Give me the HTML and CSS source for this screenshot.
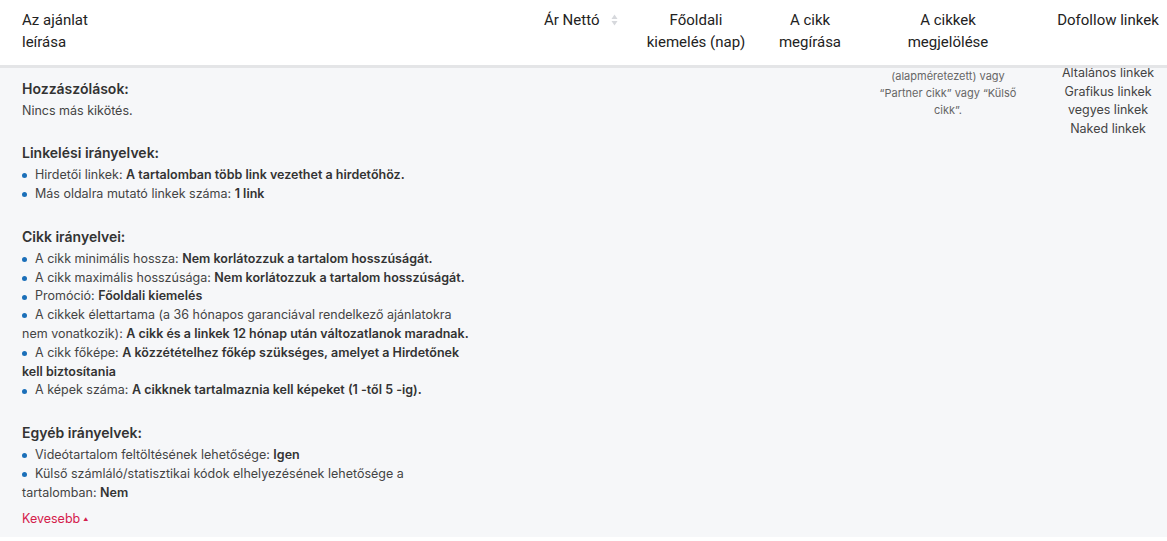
FILE: index.html
```html
<!DOCTYPE html>
<html lang="hu">

<head>
    <meta charset="UTF-8">
    <meta name="viewport" content="width=device-width, initial-scale=1.0">
    <title>Ajánlatok</title>
    <link rel="stylesheet" href="styles.css">
</head>

<body>
    <div class="offer-table">
        <div class="table-head">
            <div class="th th-desc">Az ajánlat<br>leírása</div>
            <div class="th th-price">Ár Nettó
                <span class="sort-icon">
                    <svg width="7" height="12" viewBox="0 0 7 12">
                        <path d="M3.5 0.5 L6.5 5 L0.5 5 Z" fill="#d6d8dc"/>
                        <path d="M3.5 11.5 L6.5 7 L0.5 7 Z" fill="#d6d8dc"/>
                    </svg>
                </span>
            </div>
            <div class="th th-center">Főoldali<br>kiemelés (nap)</div>
            <div class="th th-center">A cikk<br>megírása</div>
            <div class="th th-center">A cikkek<br>megjelölése</div>
            <div class="th th-center th-last">Dofollow linkek</div>
        </div>

        <div class="table-body">
            <div class="td td-desc">
                <div class="section">
                    <h3>Hozzászólások:</h3>
                    <p>Nincs más kikötés.</p>
                </div>

                <div class="section">
                    <h3>Linkelési irányelvek:</h3>
                    <ul>
                        <li>Hirdetői linkek: <b>A tartalomban több link vezethet a hirdetőhöz.</b></li>
                        <li>Más oldalra mutató linkek száma: <b>1 link</b></li>
                    </ul>
                </div>

                <div class="section">
                    <h3>Cikk irányelvei:</h3>
                    <ul>
                        <li>A cikk minimális hossza: <b>Nem korlátozzuk a tartalom hosszúságát.</b></li>
                        <li>A cikk maximális hosszúsága: <b>Nem korlátozzuk a tartalom hosszúságát.</b></li>
                        <li>Promóció: <b>Főoldali kiemelés</b></li>
                        <li>A cikkek élettartama (a 36 hónapos garanciával rendelkező ajánlatokra nem vonatkozik): <b>A cikk és a linkek 12 hónap után változatlanok maradnak.</b></li>
                        <li>A cikk főképe: <b>A közzétételhez főkép szükséges, amelyet a Hirdetőnek kell biztosítania</b></li>
                        <li>A képek száma: <b>A cikknek tartalmaznia kell képeket (1 -től 5 -ig).</b></li>
                    </ul>
                </div>

                <div class="section section-last">
                    <h3>Egyéb irányelvek:</h3>
                    <ul>
                        <li>Videótartalom feltöltésének lehetősége: <b>Igen</b></li>
                        <li>Külső számláló/statisztikai kódok elhelyezésének lehetősége a tartalomban: <b>Nem</b></li>
                    </ul>
                </div>

                <a class="toggle-link" href="#">Kevesebb<span class="caret">&#9650;</span></a>
            </div>
            <div class="td"></div>
            <div class="td"></div>
            <div class="td"></div>
            <div class="td td-center">
                <p class="note">A cikkek megjelölése: „Szponzorált cikk” (alapméretezett) vagy “Partner cikk” vagy “Külső cikk”.</p>
            </div>
            <div class="td td-center td-last">
                <ul class="link-types">
                    <li>Általános linkek</li>
                    <li>Grafikus linkek</li>
                    <li>vegyes linkek</li>
                    <li>Naked linkek</li>
                </ul>
            </div>
        </div>
    </div>
</body>

</html>
```

FILE: styles.css
```css
body {
    margin: 0;
    padding: 0;
    background-color: #fff;
    color: #333;
    font-family: Inter, "Noto Sans", sans-serif;
}

.offer-table {
    width: 100%;
    height: 537px;
    display: flex;
    flex-direction: column;
    background-color: #f6f7f9;
}

.table-head,
.table-body {
    display: grid;
    grid-template-columns: 520px 120px 112px 116px 160px 1fr;
}

.table-head {
    background: #fff;
    height: 65px;
    border-bottom: 3px solid #e4e5e7;
    font-family: Roboto, "Liberation Sans", sans-serif;
    font-size: 15px;
    line-height: 22px;
    color: #222;
}

.th {
    padding-top: 9px;
}

.th-desc {
    padding-left: 22px;
}

.th-price {
    padding-left: 24px;
    display: flex;
    align-items: flex-start;
    gap: 12px;
}

.sort-icon {
    display: flex;
    padding-top: 5px;
}

.th-center,
.td-center {
    text-align: center;
}

.th-last,
.td-last {
    padding-left: 21px;
}

.table-body {
    flex: 1;
    overflow: hidden;
}

.td-desc {
    padding: 10.5px 0 0 22px;
    width: 450px;
    font-size: 12.5px;
    line-height: 18.8px;
    color: #444;
}

.section {
    margin-bottom: 23px;
}

.section-last {
    margin-bottom: 7px;
}

.section h3 {
    margin: 0 0 4px;
    font-size: 14px;
    font-weight: 600;
    line-height: 19px;
    color: #333;
}

.section p {
    margin: 0;
}

.td-desc ul {
    list-style: none;
    margin: 0;
    padding: 0;
}

.td-desc li::before {
    content: "";
    display: inline-block;
    width: 5px;
    height: 5px;
    border-radius: 50%;
    background: #1b6fb9;
    margin-right: 8px;
    vertical-align: middle;
}

.td-desc b {
    font-weight: 600;
    color: #333;
}

.toggle-link {
    display: inline-block;
    color: #d4204c;
    text-decoration: none;
}

.caret {
    margin-left: 3px;
    font-size: 5px;
    vertical-align: middle;
}

.note {
    margin: -35px auto 0;
    width: 140px;
    font-size: 11px;
    line-height: 17.3px;
    color: #666;
}

.link-types {
    list-style: none;
    margin: -4px 0 0;
    padding: 0;
    font-size: 12.5px;
    line-height: 18.7px;
    color: #444;
}
```
